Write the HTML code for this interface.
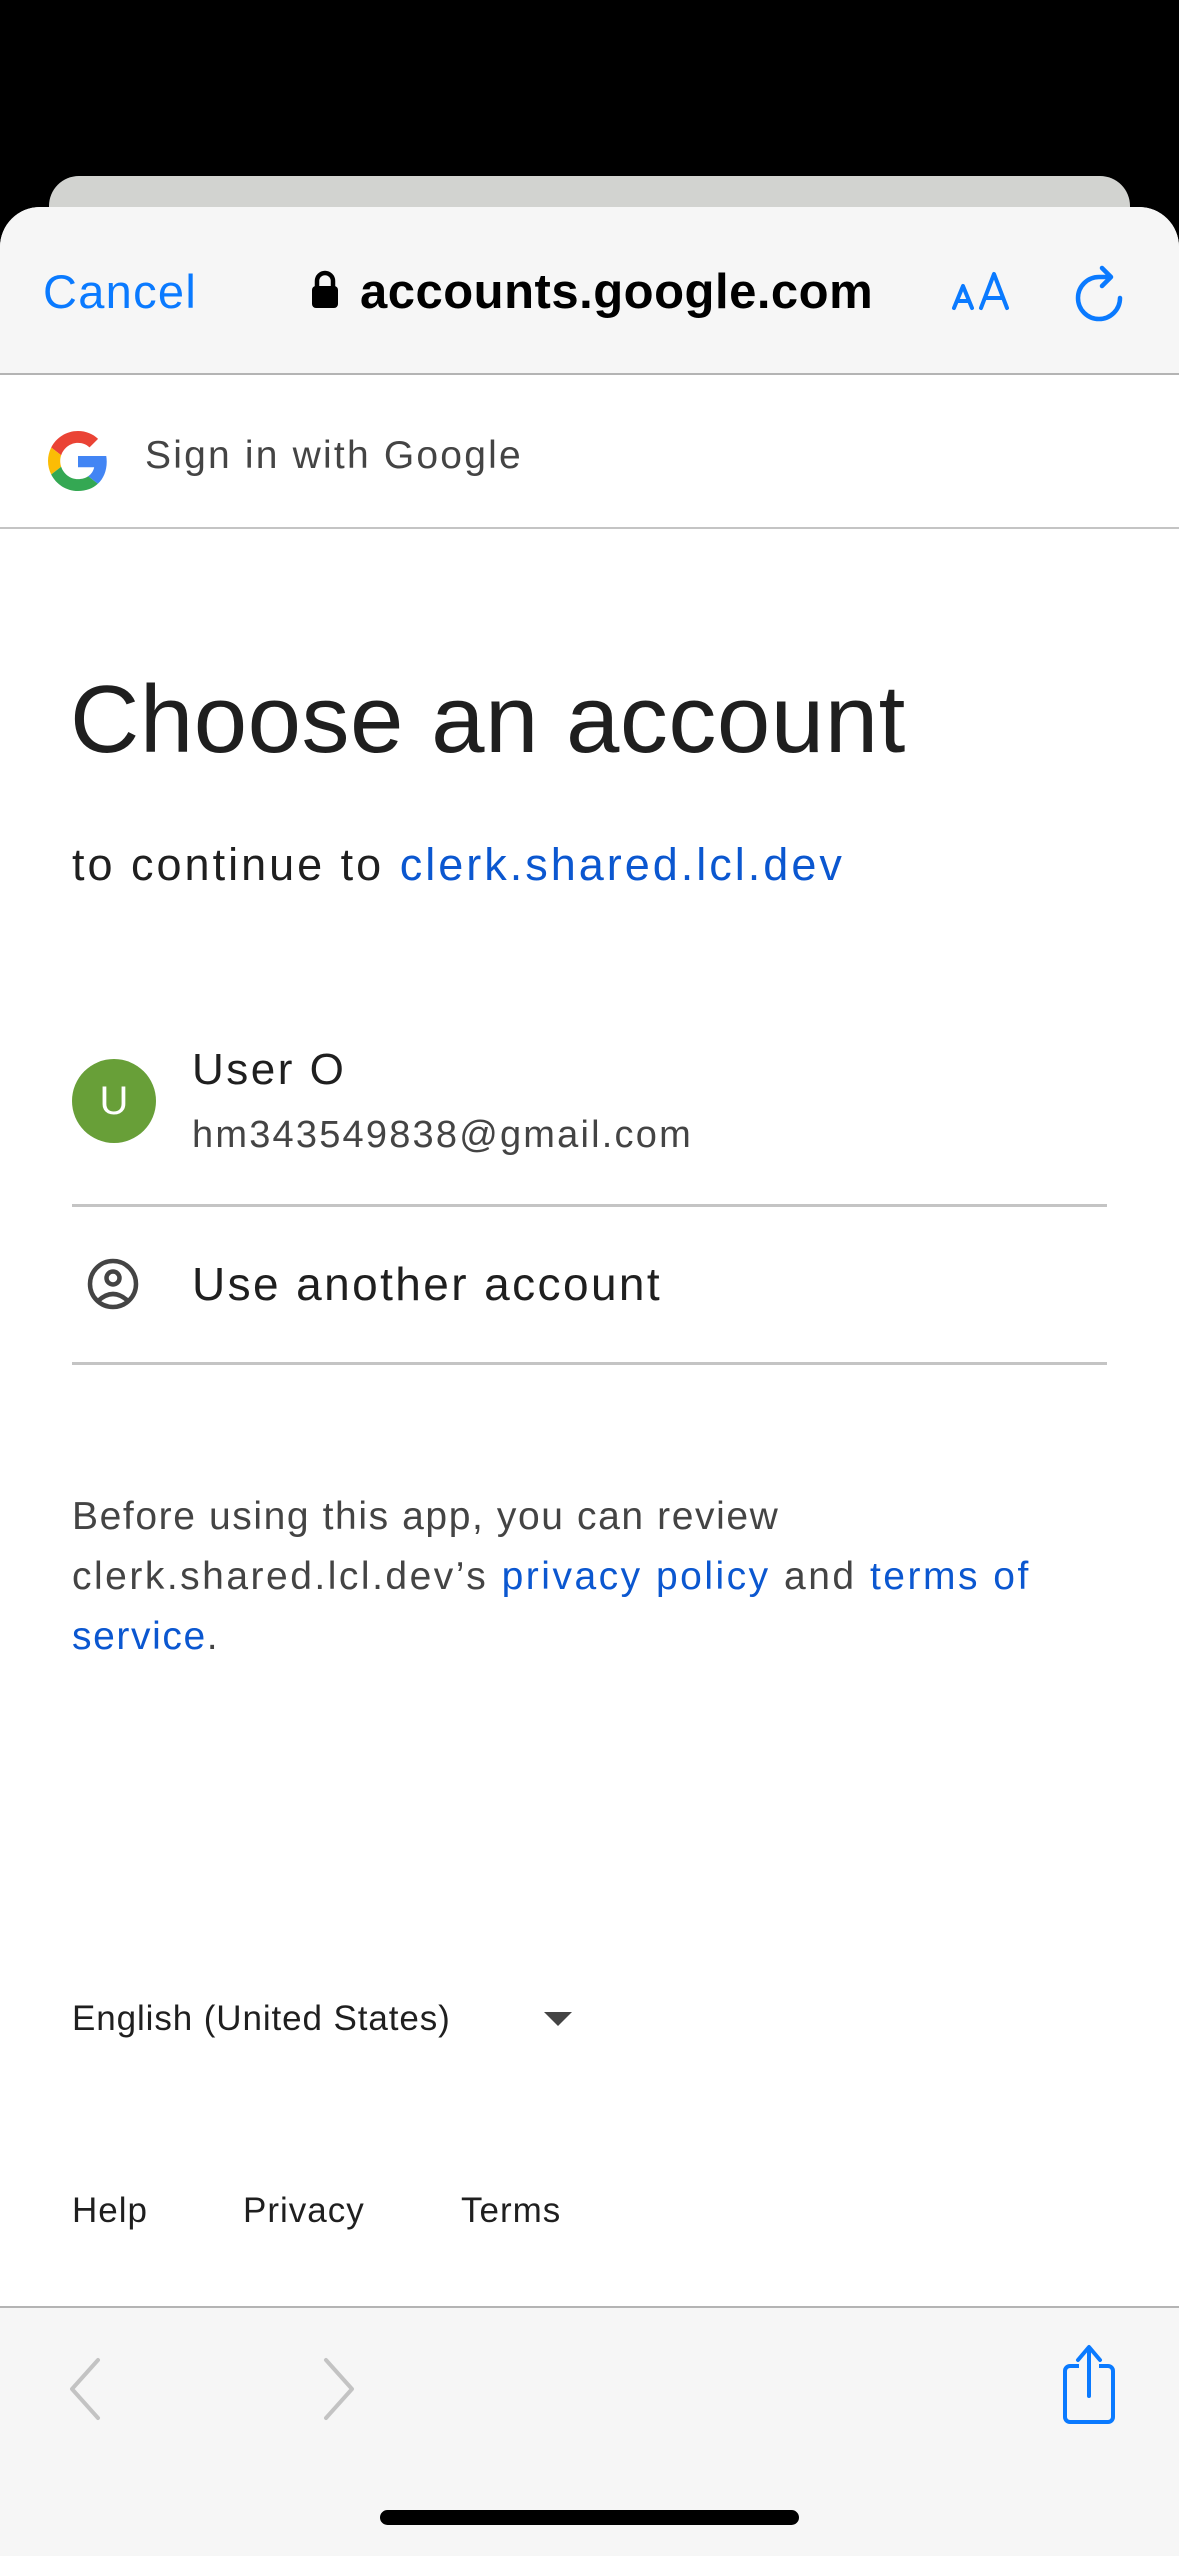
<!DOCTYPE html>
<html><head><meta charset="utf-8">
<style>
*{margin:0;padding:0;box-sizing:border-box}
html,body{width:1179px;height:2556px;overflow:hidden;background:#000}
body{position:relative;font-family:"Liberation Sans",sans-serif}
.a{position:absolute;white-space:nowrap}
</style></head><body>
<div class="a" style="left:49px;top:176px;width:1081px;height:80px;background:#d2d3d0;border-radius:30px 30px 0 0"></div>
<div class="a" style="left:0;top:207px;width:1179px;height:2349px;background:#fff;border-radius:40px 40px 0 0;overflow:hidden">
  <div class="a" style="left:0;top:0;width:1179px;height:168px;background:#f6f6f6;border-bottom:2px solid #b4b4b4"></div>
</div>
<div class="a" style="left:43px;top:262px;font-size:47px;line-height:60px;color:#0a7aff;letter-spacing:1.3px">Cancel</div>
<svg class="a" style="left:310px;top:270px" width="30" height="40" viewBox="0 0 30 40"><path d="M7 18 V11 a8 8 0 0 1 16 0 V18" fill="none" stroke="#000" stroke-width="4.5"/><rect x="2" y="16" width="26" height="22" rx="4" fill="#000"/></svg>
<div class="a" style="left:360px;top:262px;font-size:49px;line-height:60px;font-weight:bold;color:#000;letter-spacing:0.5px">accounts.google.com</div>
<svg class="a" style="left:950px;top:270px" width="65" height="42" viewBox="0 0 65 42">
<path d="M4 38 L13 16 L22 38 M7 31 H19" fill="none" stroke="#0a7aff" stroke-width="4" stroke-linecap="round" stroke-linejoin="round"/>
<path d="M31 38 L44 4 L57 38 M35 28 H53" fill="none" stroke="#0a7aff" stroke-width="4" stroke-linecap="round" stroke-linejoin="round"/></svg>
<svg class="a" style="left:1070px;top:262px" width="60" height="60" viewBox="0 0 60 60">
<path d="M50 36 A21 21 0 1 1 29 15 H38" fill="none" stroke="#0a7aff" stroke-width="4.5" stroke-linecap="round"/>
<path d="M32 6 L41 15 L32 24" fill="none" stroke="#0a7aff" stroke-width="4.5" stroke-linecap="round" stroke-linejoin="round"/></svg>
<svg class="a" style="left:48px;top:431px" width="60" height="60" viewBox="0 0 48 48">
<path fill="#EA4335" d="M24 9.5c3.54 0 6.710 1.22 9.21 3.6l6.85-6.85C35.9 2.38 30.47 0 24 0 14.62 0 6.51 5.38 2.56 13.22l7.98 6.19C12.43 13.72 17.74 9.5 24 9.5z"/>
<path fill="#4285F4" d="M46.98 24.55c0-1.570-.15-3.090-.38-4.55H24v9.02h12.94c-.58 2.96-2.26 5.48-4.78 7.18l7.73 6c4.51-4.18 7.09-10.36 7.09-17.65z"/>
<path fill="#FBBC05" d="M10.53 28.59c-.48-1.45-.76-2.99-.76-4.59s.27-3.14.76-4.59l-7.98-6.19C.92 16.46 0 20.12 0 24c0 3.88.92 7.54 2.56 10.78l7.970-6.19z"/>
<path fill="#34A853" d="M24 48c6.48 0 11.93-2.13 15.89-5.81l-7.730-6c-2.15 1.45-4.92 2.3-8.16 2.3-6.26 0-11.57-4.22-13.47-9.91l-7.98 6.19C6.51 42.62 14.620 48 24 48z"/></svg>
<div class="a" style="left:145px;top:431px;font-size:39px;line-height:50px;color:#444;letter-spacing:2.2px">Sign in with Google</div>
<div class="a" style="left:0;top:527px;width:1179px;height:2px;background:#c4c4c4"></div>
<div class="a" style="left:70px;top:660px;font-size:96px;line-height:120px;color:#1f1f1f;letter-spacing:0.5px">Choose an account</div>
<div class="a" style="left:72px;top:835px;font-size:45px;line-height:60px;color:#1f1f1f;letter-spacing:3px">to continue to <span style="color:#0b57d0">clerk.shared.lcl.dev</span></div>
<div class="a" style="left:72px;top:1059px;width:84px;height:84px;border-radius:50%;background:#689f38;color:#fff;font-size:40px;line-height:84px;text-align:center">U</div>
<div class="a" style="left:192px;top:1044px;font-size:44px;line-height:52px;color:#1f1f1f;letter-spacing:2.5px">User O</div>
<div class="a" style="left:192px;top:1111px;font-size:38px;line-height:48px;color:#444;letter-spacing:2.2px">hm343549838@gmail.com</div>
<div class="a" style="left:72px;top:1204px;width:1035px;height:3px;background:#c4c4c4"></div>
<svg class="a" style="left:86px;top:1257px" width="54" height="54" viewBox="0 0 54 54">
<circle cx="27" cy="27" r="23" fill="none" stroke="#444" stroke-width="4.5"/><circle cx="27" cy="21" r="6.5" fill="none" stroke="#444" stroke-width="4.5"/>
<path d="M12 44 Q27 30 42 44" fill="none" stroke="#444" stroke-width="4.5"/></svg>
<div class="a" style="left:192px;top:1256px;font-size:46px;line-height:56px;color:#1f1f1f;letter-spacing:2.4px">Use another account</div>
<div class="a" style="left:72px;top:1362px;width:1035px;height:3px;background:#c4c4c4"></div>
<div class="a" style="left:72px;top:1487px;font-size:39px;line-height:60px;color:#444;white-space:normal;width:1100px;letter-spacing:1.6px">Before using this app, you can review<br><span style="letter-spacing:2.5px">clerk.shared.lcl.dev’s <span style="color:#0b57d0">privacy policy</span> and <span style="color:#0b57d0">terms of</span></span><br><span style="color:#0b57d0">service</span>.</div>
<div class="a" style="left:72px;top:1994px;font-size:35px;line-height:50px;color:#1f1f1f;letter-spacing:0.9px">English (United States)</div>
<svg class="a" style="left:544px;top:2012px" width="28" height="16" viewBox="0 0 28 16"><path d="M0 0 H28 L14 14 Z" fill="#444"/></svg>
<div class="a" style="left:72px;top:2186px;font-size:35px;line-height:50px;color:#1f1f1f;letter-spacing:1px">Help</div>
<div class="a" style="left:243px;top:2186px;font-size:35px;line-height:50px;color:#1f1f1f;letter-spacing:1px">Privacy</div>
<div class="a" style="left:461px;top:2186px;font-size:35px;line-height:50px;color:#1f1f1f;letter-spacing:1px">Terms</div>
<div class="a" style="left:0;top:2306px;width:1179px;height:250px;background:#f6f6f6;border-top:2px solid #b4b4b4"></div>
<svg class="a" style="left:64px;top:2356px" width="40" height="66" viewBox="0 0 40 66"><path d="M34 4 L8 33 L34 62" fill="none" stroke="#c3c3c3" stroke-width="4" stroke-linecap="round" stroke-linejoin="round"/></svg>
<svg class="a" style="left:320px;top:2356px" width="40" height="66" viewBox="0 0 40 66"><path d="M6 4 L32 33 L6 62" fill="none" stroke="#c3c3c3" stroke-width="4" stroke-linecap="round" stroke-linejoin="round"/></svg>
<svg class="a" style="left:1056px;top:2344px" width="66" height="80" viewBox="0 0 66 80">
<path d="M23 22 H14 a5 5 0 0 0 -5 5 V73 a5 5 0 0 0 5 5 H52 a5 5 0 0 0 5 -5 V27 a5 5 0 0 0 -5 -5 H43" fill="none" stroke="#0a7aff" stroke-width="4"/>
<path d="M33 52 V4 M22 16 L33 3 L44 16" fill="none" stroke="#0a7aff" stroke-width="4" stroke-linecap="round" stroke-linejoin="round"/></svg>
<div class="a" style="left:380px;top:2510px;width:419px;height:15px;border-radius:8px;background:#000"></div>
</body></html>
